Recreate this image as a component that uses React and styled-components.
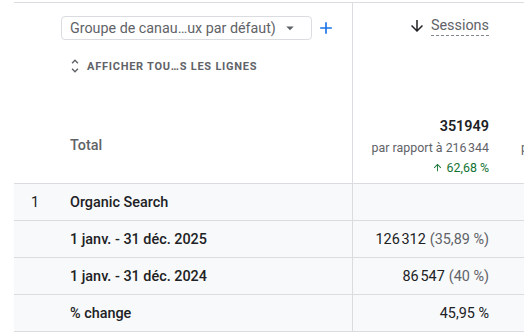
import React from 'react'
import styled, { createGlobalStyle } from 'styled-components'

const GlobalStyle = createGlobalStyle`
	body {
		margin: 0;
		background: #fff;
		font-family: Roboto, "Liberation Sans", Arial, sans-serif;
		color: #202124;
	}
`

const BORDER = '#dadce0'
const GREY = '#5f6368'

const Table = styled.div`
	margin: 2px 0 0 14px;
	width: 510px;
	overflow: hidden;
	display: grid;
	grid-template-columns: 42px 296px 153px 200px;
	border-top: 1px solid ${BORDER};
`

const HeaderLeft = styled.div`
	grid-column: 1 / span 2;
	border-bottom: 1px solid ${BORDER};
	display: flex;
	flex-direction: column;
	padding: 13px 0 0 47px;
	height: 167px;
`

const SelectRow = styled.div`
	display: flex;
	align-items: center;
	gap: 4px;
`

const Select = styled.div`
	width: 229px;
	height: 22px;
	border: 1px solid ${BORDER};
	border-radius: 4px;
	display: flex;
	align-items: center;
	justify-content: space-between;
	padding: 0 12px 0 8px;
	font-size: 14.3px;
	color: ${GREY};
	white-space: nowrap;
`

const ShowAll = styled.div`
	display: flex;
	align-items: center;
	gap: 3px;
	margin: 17px 0 0 5px;
	font-size: 11px;
	font-weight: 700;
	letter-spacing: 0.75px;
	color: ${GREY};
	text-transform: uppercase;
`

const TotalLabel = styled.div`
	margin-top: auto;
	margin-left: 9px;
	margin-bottom: 27px;
	font-size: 14.4px;
	font-weight: 500;
	line-height: 20px;
	color: ${GREY};
`

const MetricHeader = styled.div`
	height: 167px;
	border-bottom: 1px solid ${BORDER};
	border-left: ${p => (p.$divider ? `1px solid ${BORDER}` : 'none')};
	padding: ${p => (p.$divider ? '13px 16px 0 0' : '13px 0 0 16px')};
	display: flex;
	flex-direction: column;
	align-items: ${p => (p.$divider ? 'flex-end' : 'flex-start')};
	white-space: nowrap;
`

const MetricTitle = styled.div`
	display: flex;
	align-items: center;
	gap: 5px;
	height: 20px;
	font-size: 14.4px;
	line-height: 20px;
	color: ${GREY};
	span {
		border-bottom: 1px dashed #80868b;
		line-height: 18px;
	}
`

const Totals = styled.div`
	margin-top: auto;
	margin-bottom: 6px;
	display: flex;
	flex-direction: column;
	align-items: inherit;
`

const BigValue = styled.div`
	font-size: 14.4px;
	font-weight: 600;
	line-height: 20px;
	margin-bottom: 1px;
	min-height: 20px;
`

const Compare = styled.div`
	font-size: 12.4px;
	line-height: 20px;
	color: ${GREY};
`

const Delta = styled.div`
	display: flex;
	align-items: center;
	gap: 4px;
	min-height: 19px;
	font-size: 12.4px;
	line-height: 19px;
	color: #137333;
`

const Cell = styled.div`
	height: 36px;
	background: #f8f9fa;
	border-bottom: 1px solid ${BORDER};
	border-left: ${p => (p.$divider ? `1px solid ${BORDER}` : 'none')};
	display: flex;
	align-items: center;
	justify-content: ${p => (p.$right ? 'flex-end' : 'flex-start')};
	padding: ${p => p.$pad || '0'};
	font-size: 14.4px;
	font-weight: ${p => (p.$bold ? 500 : 400)};
	white-space: nowrap;
`

const Muted = styled.span`
	color: ${GREY};
	margin-left: 4px;
`

const Icon = ({ d, size, color }) => (
	<svg width={size} height={size} viewBox="0 0 24 24" fill={color}>
		<path d={d} />
	</svg>
)

const rows = [
	{ index: '1', label: 'Organic Search', value: null },
	{ label: '1 janv. - 31 déc. 2025', value: '126\u202f312', share: '(35,89\u00a0%)' },
	{ label: '1 janv. - 31 déc. 2024', value: '86\u202f547', share: '(40\u00a0%)' },
	{ label: '% change', value: '45,95\u00a0%' },
]

export default function App() {
	return (
		<>
			<GlobalStyle />
			<Table>
				<HeaderLeft>
					<SelectRow>
						<Select>
							<span>Groupe de canau…ux par défaut)</span>
							<Icon d="M7 10l5 5 5-5z" size={18} color={GREY} />
						</Select>
						<Icon d="M19 13h-6v6h-2v-6H5v-2h6V5h2v6h6v2z" size={20} color="#1a73e8" />
					</SelectRow>
					<ShowAll>
						<Icon d="M12 5.83L15.17 9l1.41-1.41L12 3 7.41 7.59 8.83 9 12 5.83zm0 12.34L8.83 15l-1.41 1.41L12 21l4.59-4.59L15.17 15 12 18.17z" size={18} color={GREY} />
						Afficher tou…s les lignes
					</ShowAll>
					<TotalLabel>Total</TotalLabel>
				</HeaderLeft>
				<MetricHeader $divider>
					<MetricTitle>
						<Icon d="M20 12l-1.41-1.41L13 16.17V4h-2v12.17l-5.58-5.59L4 12l8 8 8-8z" size={18} color="#202124" />
						<span>Sessions</span>
					</MetricTitle>
					<Totals>
						<BigValue>351949</BigValue>
						<Compare>par rapport à 216{'\u202f'}344</Compare>
						<Delta>
							<Icon d="M4 12l1.41 1.41L11 7.83V20h2V7.83l5.58 5.59L20 12l-8-8-8 8z" size={11} color="#137333" />
							62,68{'\u00a0'}%
						</Delta>
					</Totals>
				</MetricHeader>
				<MetricHeader>
					<MetricTitle />
					<Totals>
						<BigValue />
						<Compare>p</Compare>
						<Delta />
					</Totals>
				</MetricHeader>
				{rows.map(row => (
					<React.Fragment key={row.label}>
						<Cell $pad="0 0 0 17px">{row.index}</Cell>
						<Cell $bold $pad="0 0 0 14px">{row.label}</Cell>
						<Cell $divider $right $pad="0 16px 0 0">
							{row.value}
							{row.share && <Muted>{row.share}</Muted>}
						</Cell>
						<Cell />
					</React.Fragment>
				))}
			</Table>
		</>
	)
}
